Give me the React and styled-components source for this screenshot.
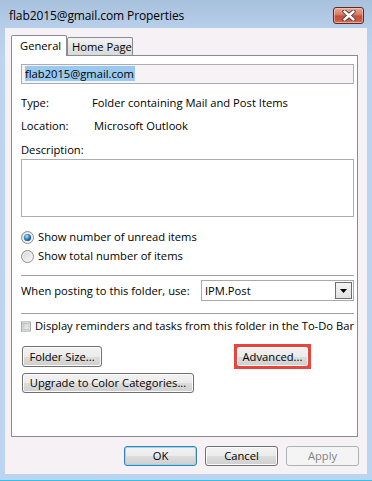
import React from "react";
import styled, { createGlobalStyle, css } from "styled-components";

const Global = createGlobalStyle`
  html, body { margin: 0; padding: 0; background: #bcd4ef; }
  body { font-family: "Open Sans", "Noto Sans", sans-serif; font-size: 11.2px; color: #000; }
  * { box-sizing: border-box; }
`;

const Win = styled.div`
  width: 372px;
  height: 481px;
  display: flex;
  flex-direction: column;
  background: linear-gradient(#a7c0dc 0px, #b6cee9 26px, #bcd4ef 60px, #bcd4ef 100%);
  border-bottom: 1px solid #22c6ef;
`;

const TitleBar = styled.div`
  height: 28px;
  flex: none;
  display: flex;
  align-items: flex-start;
  justify-content: space-between;
  padding: 0 8px 0 9px;
`;

const TitleText = styled.div`
  margin-top: 8px;
  line-height: 16px;
  font-size: 12px;
  letter-spacing: -0.1px;
`;

const CloseBtn = styled.div`
  margin-top: 7px;
  width: 31px;
  height: 17px;
  border: 1px solid #5e2a25;
  border-radius: 3px;
  background: linear-gradient(#e9a896 0%, #d98169 40%, #c4503b 55%, #c9563f 80%, #dc7a5f 100%);
  box-shadow: inset 0 0 0 1px rgba(255, 210, 200, 0.55);
  display: flex;
  align-items: center;
  justify-content: center;
`;

const Client = styled.div`
  margin: 0 5px;
  height: 446px;
  flex: none;
  background: #f6f1f5;
  padding: 7px 9px 0 6px;
  display: flex;
  flex-direction: column;
`;

const Tabs = styled.div`
  height: 20px;
  display: flex;
  align-items: flex-end;
  position: relative;
  z-index: 1;
`;

const Tab = styled.div`
  border: 1px solid #898c95;
  border-bottom: none;
  display: flex;
  align-items: center;
  ${(p) =>
    p.$active
      ? css`
          width: 56px;
          height: 21px;
          margin-bottom: -1px;
          background: #fff;
          padding: 0 0 1px 8px;
          border-radius: 2px 2px 0 0;
        `
      : css`
          width: 66px;
          height: 18px;
          background: linear-gradient(#f4f4f4, #e4e4e4 50%, #d9d9d9);
          padding: 0 0 0 4px;
          border-radius: 2px 2px 0 0;
        `}
`;

const Panel = styled.div`
  width: 347px;
  height: 382px;
  background: #fff;
  border: 1px solid #898c95;
  padding: 8px 3px 0 9px;
  display: flex;
  flex-direction: column;
`;

const NameField = styled.div`
  height: 20px;
  border: 1px solid #abadb3;
  background: #f6f2f6;
  padding: 1px 0 0 3px;
  display: flex;
  align-items: flex-start;
`;

const Selected = styled.span`
  background: #99c9ef;
  line-height: 15px;
  height: 15px;
  padding-right: 1px;
`;

const Row = styled.div`
  height: 16px;
  line-height: 16px;
  margin-top: ${(p) => p.$mt || 0}px;
  display: flex;
  align-items: center;
  white-space: nowrap;
`;

const Label = styled.span`
  width: 71px;
  flex: none;
`;

const Value = styled.span`
  margin-left: ${(p) => p.$offset || 0}px;
`;

const TextArea = styled.div`
  margin-top: 1px;
  height: 58px;
  border: 1px solid #abadb3;
  background: #fff;
`;

const OptionRow = styled(Row)`
  gap: 4px;
`;

const Separator = styled.div`
  margin-top: ${(p) => p.$mt}px;
  height: 1px;
  background: #a0a0a0;
`;

const ComboRow = styled.div`
  margin-top: 4px;
  height: 21px;
  display: flex;
  align-items: center;
  justify-content: space-between;
`;

const Combo = styled.div`
  width: 153px;
  height: 21px;
  border: 1px solid #a9a9a9;
  background: #fff;
  display: flex;
  align-items: center;
  justify-content: space-between;
  padding: 0 1px 0 3px;
`;

const DropBtn = styled.div`
  width: 17px;
  height: 17px;
  border: 1px solid #6e6e6e;
  background: linear-gradient(#f4f4f4, #e2e2e2);
  display: flex;
  align-items: center;
  justify-content: center;
`;

const ButtonRow = styled.div`
  margin-top: ${(p) => p.$mt}px;
  margin-left: 1px;
  display: flex;
  align-items: center;
  gap: ${(p) => p.$gap || 0}px;
`;

const Button = styled.div`
  position: relative;
  width: ${(p) => p.$w || 73}px;
  height: ${(p) => p.$h || 20}px;
  border: 1px solid #707070;
  border-radius: 3px;
  background: linear-gradient(#f2f2f2 0%, #ebebeb 50%, #dddddd 50%, #cfcfcf 100%);
  box-shadow: inset 0 0 0 1px #fbfbfb;
  display: flex;
  align-items: center;
  justify-content: center;
  white-space: nowrap;
  line-height: 16px;
  ${(p) =>
    p.$default &&
    css`
      border-color: #3c7fb1;
      box-shadow: inset 0 0 0 1px #8edaf7;
    `}
  ${(p) =>
    p.$disabled &&
    css`
      border-color: #adb2b5;
      background: #f4f4f4;
      box-shadow: none;
      color: #838383;
    `}
  ${(p) =>
    p.$highlight &&
    css`
      &::after {
        content: "";
        position: absolute;
        inset: -3px;
        border: 3px solid #e8463c;
      }
    `}
`;

const Footer = styled.div`
  margin-top: 9px;
  margin-right: -1px;
  display: flex;
  justify-content: flex-end;
  gap: 8px;
`;

const Radio = ({ checked }) => (
  <svg width="13" height="13" viewBox="0 0 13 13">
    <defs>
      <linearGradient id="rb" x1="0" y1="0" x2="1" y2="1">
        <stop offset="0" stopColor="#d2d2d2" />
        <stop offset="1" stopColor="#fafafa" />
      </linearGradient>
      <radialGradient id="rd" cx="0.4" cy="0.35" r="0.7">
        <stop offset="0" stopColor="#b9ecff" />
        <stop offset="0.45" stopColor="#3d93d2" />
        <stop offset="1" stopColor="#133f6f" />
      </radialGradient>
    </defs>
    <circle cx="6.5" cy="6.5" r="6" fill="url(#rb)" stroke="#8d8d8d" strokeWidth="1" />
    <circle cx="6.5" cy="6.5" r="4.6" fill="none" stroke="#f3f3f3" strokeWidth="0.8" />
    {checked && <circle cx="6.5" cy="6.5" r="3.6" fill="url(#rd)" />}
  </svg>
);

const CheckBox = () => (
  <svg width="13" height="13" viewBox="0 0 13 13">
    <defs>
      <linearGradient id="cb" x1="0" y1="0" x2="1" y2="1">
        <stop offset="0" stopColor="#c9ccd1" />
        <stop offset="1" stopColor="#f4f4f4" />
      </linearGradient>
    </defs>
    <rect x="0.5" y="0.5" width="12" height="12" fill="#f5f5f5" stroke="#8e8f8f" />
    <rect x="2.5" y="2.5" width="8" height="8" fill="url(#cb)" stroke="#b6b8bc" strokeWidth="1" />
  </svg>
);

export default function App() {
  return (
    <>
      <Global />
      <Win>
        <TitleBar>
          <TitleText>flab2015@gmail.com Properties</TitleText>
          <CloseBtn>
            <svg width="14" height="11" viewBox="0 0 14 11">
              <path d="M2.5 1.5 L11.5 9.5 M11.5 1.5 L2.5 9.5" stroke="#4a3a3a" strokeWidth="4.2" strokeLinecap="round" />
              <path d="M2.5 1.5 L11.5 9.5 M11.5 1.5 L2.5 9.5" stroke="#ffffff" strokeWidth="2.4" strokeLinecap="round" />
            </svg>
          </CloseBtn>
        </TitleBar>
        <Client>
          <Tabs>
            <Tab $active>General</Tab>
            <Tab>Home Page</Tab>
          </Tabs>
          <Panel>
            <NameField>
              <Selected>flab2015@gmail.com</Selected>
            </NameField>
            <Row $mt={11}>
              <Label>Type:</Label>
              <Value>Folder containing Mail and Post Items</Value>
            </Row>
            <Row $mt={7}>
              <Label>Location:</Label>
              <Value $offset={2}>Microsoft Outlook</Value>
            </Row>
            <Row $mt={8}>Description:</Row>
            <TextArea />
            <OptionRow $mt={12}>
              <Radio checked />
              <span>Show number of unread items</span>
            </OptionRow>
            <OptionRow $mt={3}>
              <Radio />
              <span>Show total number of items</span>
            </OptionRow>
            <Separator $mt={11} />
            <ComboRow>
              <span>When posting to this folder, use:</span>
              <Combo>
                <span>IPM.Post</span>
                <DropBtn>
                  <svg width="7" height="4" viewBox="0 0 7 4">
                    <path d="M0 0 H7 L3.5 4 Z" fill="#000" />
                  </svg>
                </DropBtn>
              </Combo>
            </ComboRow>
            <Separator $mt={12} />
            <OptionRow $mt={4}>
              <CheckBox />
              <span>Display reminders and tasks from this folder in the To-Do Bar</span>
            </OptionRow>
            <ButtonRow $mt={12} $gap={134}>
              <Button $w={80} $h={21}>Folder Size...</Button>
              <Button $w={73} $h={21} $highlight>Advanced...</Button>
            </ButtonRow>
            <ButtonRow $mt={6}>
              <Button $w={172} $h={20}>Upgrade to Color Categories...</Button>
            </ButtonRow>
          </Panel>
          <Footer>
            <Button $default>OK</Button>
            <Button>Cancel</Button>
            <Button $disabled>Apply</Button>
          </Footer>
        </Client>
      </Win>
    </>
  );
}
